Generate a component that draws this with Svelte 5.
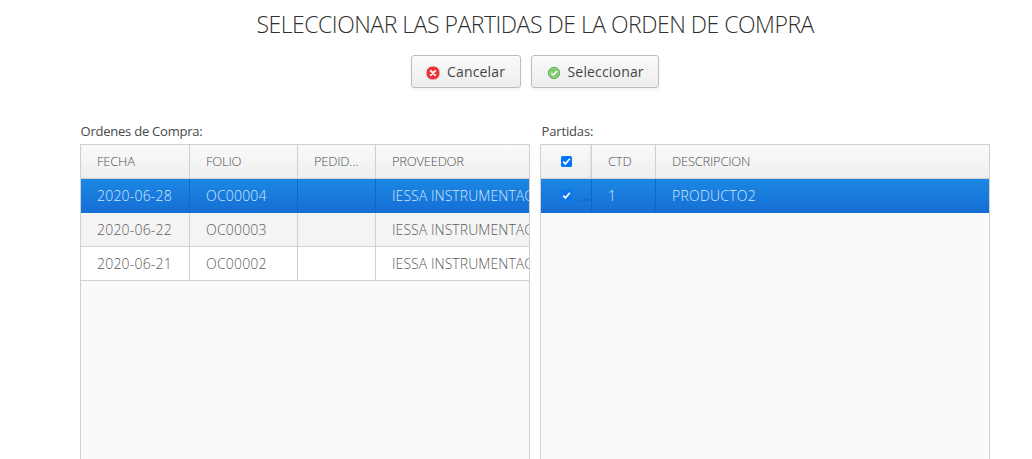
<script>
  const orders = [
    ['2020-06-28', 'OC00004', '', 'IESSA INSTRUMENTACION'],
    ['2020-06-22', 'OC00003', '', 'IESSA INSTRUMENTACION'],
    ['2020-06-21', 'OC00002', '', 'IESSA INSTRUMENTACION']
  ];
  const heads = ['FECHA', 'FOLIO', 'PEDID…', 'PROVEEDOR'];
</script>

{#snippet check(fill)}
  <svg class="check" width="11" height="11" viewBox="0 0 11 11">
    <rect width="11" height="11" rx="1.5" {fill} />
    <path d="M2.2 5.6 4.4 7.9 8.9 2.7" fill="none" stroke="#fff" stroke-width="1.7" />
  </svg>
{/snippet}

<main>
  <h1>SELECCIONAR LAS PARTIDAS DE LA ORDEN DE COMPRA</h1>
  <div class="actions">
    <button>
      <svg width="14" height="14" viewBox="0 0 14 14">
        <rect x="1" y="1" width="12" height="12" rx="4.8" fill="#ee3338" stroke="#e0403f" />
        <path d="m4.8 4.8 4.4 4.4m0-4.4-4.4 4.4" stroke="#fff" stroke-width="1.9" stroke-linecap="round" />
      </svg>
      <span>Cancelar</span>
    </button>
    <button class="ok">
      <svg width="14" height="14" viewBox="0 0 14 14">
        <circle cx="7" cy="7" r="5.7" fill="#7cc86c" stroke="#5dae51" />
        <circle cx="7" cy="7" r="4.6" fill="none" stroke="#a2d896" stroke-width=".8" />
        <path d="m4.3 7 2.1 2.1L10 5" fill="none" stroke="#fff" stroke-width="1.7" />
      </svg>
      <span>Seleccionar</span>
    </button>
  </div>
  <div class="panels">
    <section>
      <label>Ordenes de Compra:</label>
      <div class="grid orders">
        <div class="row head">
          {#each heads as h}<div class="cell"><span>{h}</span></div>{/each}
        </div>
        {#each orders as row, i}
          <div class="row" class:selected={i === 0} class:odd={i === 1}>
            {#each row as c}<div class="cell"><span>{c}</span></div>{/each}
          </div>
        {/each}
      </div>
    </section>
    <section>
      <label class="second">Partidas:</label>
      <div class="grid items">
        <div class="row head">
          <div class="cell tick">{@render check('#0075ff')}</div>
          <div class="cell"><span>CTD</span></div>
          <div class="cell"><span>DESCRIPCION</span></div>
        </div>
        <div class="row selected">
          <div class="cell tick">{@render check('#0b76ee')}<i>...</i></div>
          <div class="cell"><span>1</span></div>
          <div class="cell"><span>PRODUCTO2</span></div>
        </div>
      </div>
    </section>
  </div>
</main>

<style>
  :global(body) { background: #fff; }
  main { height: 459px; overflow: hidden; font-family: "Open Sans", sans-serif; color: #474747; }
  h1 { margin: 0; padding: 7px 0 0 256.5px; height: 48px; box-sizing: border-box; font-size: 23px; line-height: 34px; font-weight: 300; letter-spacing: -0.49px; white-space: nowrap; color: #303030; }
  .actions { display: flex; gap: 10px; padding: 7px 0 0 411px; height: 75px; box-sizing: border-box; }
  button { display: flex; align-items: center; gap: 7px; width: 110px; height: 33px; box-sizing: border-box; padding: 0 0 0 14px; border: 1px solid #bdbdbd; border-radius: 3px; background: linear-gradient(#fafafa, #ededed); box-shadow: inset 0 1px 0 #fff, 0 2px 3px rgba(0,0,0,.05); color: #444; font: 14px "Open Sans", sans-serif; letter-spacing: .17px; }
  button.ok { width: 128px; padding-left: 15px; gap: 6.5px; }
  button svg { position: relative; top: 1px; }
  .panels { display: flex; gap: 10px; padding-left: 80px; }
  section { width: 450px; }
  label { display: block; height: 21px; line-height: 17px; font-size: 13px; letter-spacing: -.23px; padding-left: .5px; }
  label.second { padding-left: 1.5px; letter-spacing: -.15px; }
  .grid { height: 330px; box-sizing: border-box; border: 1px solid #d0d0d0; background: #fafafa; overflow: hidden; }
  .row { display: grid; height: 34px; box-sizing: border-box; border-bottom: 1px solid #d0d0d0; background: #fff; color: #5c5c5c; }
  .orders .row { grid-template-columns: 109px 108px 78px 153px; }
  .items .row { grid-template-columns: 51px 64px 333px; }
  .cell { display: flex; align-items: center; padding: 0 16px; border-right: 1px solid #d0d0d0; font-size: 14px; font-weight: 300; letter-spacing: .2px; white-space: nowrap; min-width: 0; overflow: hidden; }
  .cell:last-child { border-right: 0; padding-right: 0; letter-spacing: .06px; }
  .items .cell:last-child { letter-spacing: .24px; }
  .cell span { white-space: nowrap; }
  .head { background: linear-gradient(#fafafa, #efefef); color: #505050; }
  .head .cell, .items .head .cell:last-child { font-size: 13px; letter-spacing: -.24px; }
  .head .cell span { padding-bottom: 2px; }
  .items .head .cell:first-child { box-shadow: inset -2px 0 2px -1px rgba(0,0,0,.08); }
  .odd { background: #f4f4f4; }
  .selected { background: linear-gradient(#1b87e3, #166ed5) border-box; color: #d3e8fc; border-color: transparent; }
  .selected .cell { border-color: #1767b8; }
  .tick { padding: 0 0 0 20px; }
  .tick i { font-style: normal; font-weight: 400; margin-left: 7px; color: #1658a6; }
</style>
